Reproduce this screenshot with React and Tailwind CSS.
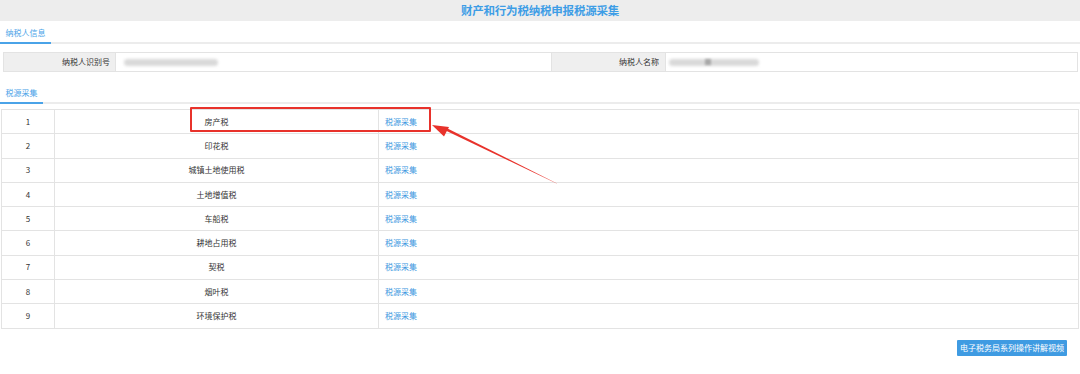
const rows = [
  '房产税',
  '印花税',
  '城镇土地使用税',
  '土地增值税',
  '车船税',
  '耕地占用税',
  '契税',
  '烟叶税',
  '环境保护税',
];

const font = { fontFamily: '"Noto Sans CJK SC", "Noto Sans", sans-serif' };

const Tab = ({ label, width }) => (
  <div className="h-[23px] border-b-2 border-[#ececec] flex">
    <div
      className={`h-[23px] shrink-0 border-b-2 border-[#4aa3e8] flex items-center justify-center pt-[2px] text-[8px] text-[#4aa3e8] ${width}`}
    >
      {label}
    </div>
  </div>
);

const Blur = ({ w, dark }) => (
  <div className="relative flex items-center">
    <div className={`h-[7px] ${w} bg-[#d9d9d9] blur-[1.5px] rounded-sm`} />
    {dark && <div className="absolute left-[36px] h-[6px] w-[6px] bg-[#a8a8a8] blur-[1px]" />}
  </div>
);

export default function App() {
  return (
    <div className="relative w-[1080px] h-[374px] bg-white text-[#333]" style={font}>
      <div className="h-[21px] bg-[#ededed] flex items-center justify-center">
        <span className="text-[11.5px] font-bold text-[#3d9de6] tracking-[-0.2px]">财产和行为税纳税申报税源采集</span>
      </div>

      <Tab label="纳税人信息" width="w-[51px]" />

      <div className="mt-[8px] ml-[3px] mr-[2px] h-[20px] border border-[#e3e3e3] flex text-[8px]">
        <div className="w-[112px] bg-[#efefef] border-r border-[#e3e3e3] flex items-center justify-end pr-[5px]">
          纳税人识别号
        </div>
        <div className="w-[436px] border-r border-[#e3e3e3] flex items-center pl-[8px]">
          <Blur w="w-[94px]" />
        </div>
        <div className="w-[114px] bg-[#efefef] border-r border-[#e3e3e3] flex items-center justify-end pr-[6px]">
          纳税人名称
        </div>
        <div className="flex-1 flex items-center pl-[3px]">
          <Blur w="w-[90px]" dark />
        </div>
      </div>

      <div className="mt-[9px]">
        <Tab label="税源采集" width="w-[43px]" />
      </div>

      <table className="mt-[5px] ml-[1px] w-[1078px] border-collapse text-[8px]">
        <tbody>
          {rows.map((name, i) => (
            <tr key={name} className="h-[24.3px]">
              <td className="w-[53px] border border-[#e3e3e3] text-center p-0">{i + 1}</td>
              <td className="w-[324px] border border-[#e3e3e3] text-center p-0">{name}</td>
              <td className="border border-[#e3e3e3] p-0 pl-[6px] text-[#3d97e0]">税源采集</td>
            </tr>
          ))}
        </tbody>
      </table>

      <div className="flex justify-end mt-[11px] pr-[13px]">
        <button className="h-[16px] w-[110px] whitespace-nowrap bg-[#3f9be2] text-white text-[8px] rounded-[1px] flex items-center justify-center">
          电子税务局系列操作讲解视频
        </button>
      </div>

      <div className="absolute left-[190px] top-[107px] w-[241px] h-[25px] border-2 border-[#e8322b] rounded-[1px]" />

      <svg className="absolute left-0 top-0" width="1080" height="374" viewBox="0 0 1080 374">
        <polygon points="432,125 449,127 444,136.5" fill="#e8322b" />
        <polygon points="445.6,130.5 447,128.2 557,183.4 556.6,183.6" fill="#e8322b" />
      </svg>
    </div>
  );
}
